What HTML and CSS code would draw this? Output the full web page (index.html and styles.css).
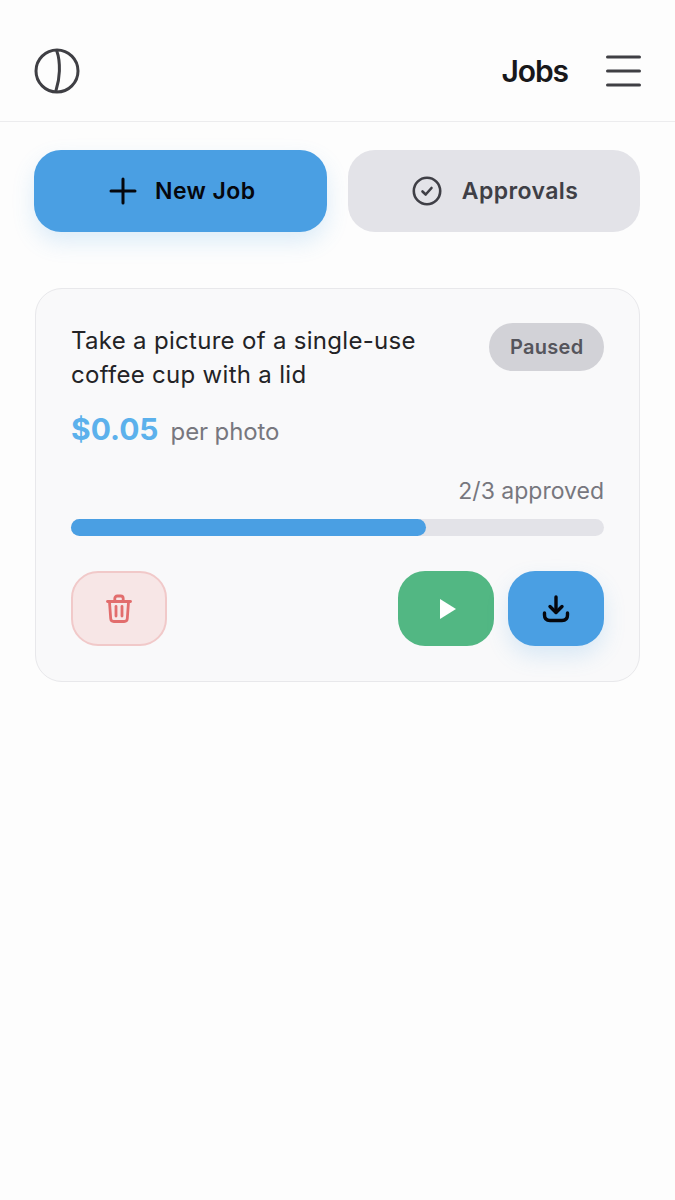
FILE: index.html
```html
<!DOCTYPE html>
<html>
<head>
    <title>Jobs</title>
    <link rel="stylesheet" href="styles.css">
</head>
<body>
    <header class="topbar">
        <svg class="logo" viewBox="0 0 46 46" fill="none" stroke="#3f3f44" stroke-width="3" stroke-linecap="round">
            <circle cx="23" cy="23" r="21"/>
            <path d="M22.800 3C25 9 25.600 16 25.400 23C25.200 30 24 36 22 42.500"/>
        </svg>
        <div class="topbar-right">
            <span class="page-title">Jobs</span>
            <svg class="menu-icon" viewBox="0 0 36 34" fill="none" stroke="#3f3f44" stroke-width="3" stroke-linecap="round">
                <path d="M2.500 3H34.500"/>
                <path d="M2.500 17H34.500"/>
                <path d="M2.500 31H34.500"/>
            </svg>
        </div>
    </header>

    <main class="content">
        <div class="actions">
            <button class="btn btn-primary">
                <svg class="btn-icon-plus" viewBox="0 0 28 28" fill="none" stroke="#05070d" stroke-width="3" stroke-linecap="round">
                    <path d="M14 2V26"/>
                    <path d="M2 14H26"/>
                </svg>
                <span class="btn-label">New Job</span>
            </button>
            <button class="btn btn-secondary">
                <svg class="btn-icon-check" viewBox="0 0 30 30" fill="none" stroke="#3f3f46" stroke-width="2.6" stroke-linecap="round" stroke-linejoin="round">
                    <circle cx="15" cy="15" r="13.200"/>
                    <path d="M10.500 15.500L13.700 18.500L19.500 12"/>
                </svg>
                <span class="btn-label">Approvals</span>
            </button>
        </div>

        <section class="job-card">
            <div class="job-head">
                <p class="job-title">Take a picture of a single-use coffee cup with a lid</p>
                <span class="badge">Paused</span>
            </div>
            <div class="job-price">
                <span class="price">$0.05</span>
                <span class="price-unit">per photo</span>
            </div>
            <div class="job-count">2/3 approved</div>
            <div class="progress">
                <div class="progress-fill" style="width: 66.67%"></div>
            </div>
            <div class="job-actions">
                <button class="icon-btn icon-btn-delete">
                    <svg width="28" height="30" viewBox="0 0 28 30" fill="none" stroke="#e26d6d" stroke-width="2.8" stroke-linecap="round" stroke-linejoin="round">
                        <path d="M2.500 7.500H25.500"/>
                        <path d="M9.800 7V4.500C9.800 3 10.800 2 12.300 2H15.700C17.200 2 18.200 3 18.200 4.500V7"/>
                        <path d="M4.500 8L5.700 24.500C5.800 26.500 7 27.500 8.800 27.500H19.200C21 27.500 22.200 26.500 22.300 24.500L23.500 8"/>
                        <path d="M11 12.500V22"/>
                        <path d="M17 12.500V22"/>
                    </svg>
                </button>
                <div class="job-actions-right">
                    <button class="icon-btn icon-btn-play">
                        <svg class="play-icon" width="18" height="20" viewBox="0 0 18 20"><path d="M1 0L17 10L1 20Z" fill="#fff"/></svg>
                    </button>
                    <button class="icon-btn icon-btn-download">
                        <svg width="28" height="28" viewBox="0 0 28 28" fill="none" stroke="#05070d" stroke-width="3.4" stroke-linecap="round" stroke-linejoin="round">
                            <path d="M14 2V17"/>
                            <path d="M8 11.500L14 17.500L20 11.500"/>
                            <path d="M2.500 18V20C2.500 23.500 4.500 25.500 8 25.500H20C23.500 25.500 25.500 23.500 25.500 20V18"/>
                        </svg>
                    </button>
                </div>
            </div>
        </section>
    </main>
</body>
</html>
```

FILE: styles.css
```css
* {
    box-sizing: border-box;
}

body {
    margin: 0;
    background-color: #fdfdfd;
    font-family: Inter, "Noto Sans", sans-serif;
    color: #1c1c1f;
}

.topbar {
    display: flex;
    align-items: center;
    justify-content: space-between;
    height: 122px;
    padding: 20px 34px 0;
    border-bottom: 1px solid #ececee;
}

.logo {
    width: 46px;
    height: 46px;
}

.topbar-right {
    display: flex;
    align-items: center;
    gap: 37px;
}

.page-title {
    font-size: 30px;
    font-weight: 600;
    letter-spacing: -1.1px;
    color: #18181b;
}

.menu-icon {
    width: 36px;
    height: 34px;
}

.content {
    padding: 28px 35px;
}

.actions {
    display: grid;
    grid-template-columns: 1fr 1fr;
    gap: 21px;
    margin-bottom: 56px;
    margin-left: -1px;
}

.btn {
    display: flex;
    align-items: center;
    justify-content: center;
    gap: 18px;
    height: 82px;
    border: none;
    border-radius: 27px;
    font-family: inherit;
    font-size: 23px;
    font-weight: 600;
    cursor: pointer;
}

.btn-label {
    letter-spacing: 0.4px;
}

.btn-primary {
    padding: 0 0 0 4px;
    background-color: #4a9fe3;
    color: #05070d;
    box-shadow: 0 10px 22px rgba(74, 159, 227, 0.18);
}

.btn-secondary {
    gap: 19.5px;
    padding: 0 0 0 3px;
    background-color: #e3e3e8;
    color: #3f3f46;
}

.btn-icon-plus {
    width: 28px;
    height: 28px;
}

.btn-icon-check {
    width: 30px;
    height: 30px;
}

.job-card {
    padding: 35px;
    background-color: #f9f9fa;
    border: 1px solid #e8e8eb;
    border-radius: 27px;
}

.job-head {
    display: flex;
    align-items: flex-start;
    justify-content: space-between;
    gap: 20px;
    margin-bottom: 19px;
}

.job-title {
    margin: 0;
    font-size: 24px;
    line-height: 34px;
    letter-spacing: 0.3px;
    color: #232326;
}

.badge {
    flex-shrink: 0;
    margin-top: -1px;
    padding: 0 20.5px;
    height: 48px;
    line-height: 48px;
    background-color: #d2d2d7;
    border-radius: 24px;
    font-size: 20px;
    font-weight: 600;
    letter-spacing: 0.3px;
    color: #55555c;
}

.job-price {
    display: flex;
    align-items: baseline;
    gap: 12px;
    margin-bottom: 30px;
}

.price {
    font-size: 30px;
    font-weight: 700;
    color: #5cb1ec;
}

.price-unit {
    font-size: 24px;
    letter-spacing: -0.1px;
    color: #77777e;
}

.job-count {
    margin-bottom: 14px;
    text-align: right;
    font-size: 23px;
    color: #77777e;
}

.progress {
    height: 17px;
    margin-bottom: 35px;
    background-color: #e3e3e8;
    border-radius: 9px;
}

.progress-fill {
    height: 100%;
    background-color: #4a9fe3;
    border-radius: 9px;
}

.job-actions {
    display: flex;
    justify-content: space-between;
}

.job-actions-right {
    display: flex;
    gap: 14px;
}

.icon-btn {
    display: flex;
    align-items: center;
    justify-content: center;
    width: 96px;
    height: 75px;
    padding: 0;
    border: none;
    border-radius: 27px;
    cursor: pointer;
}

.icon-btn-delete {
    background-color: #f7e6e6;
    border: 2px solid #f1c9c9;
}

.icon-btn-play {
    background-color: #52b783;
}

.play-icon {
    margin-left: 4px;
}

.icon-btn-download {
    background-color: #4a9fe3;
    box-shadow: 0 10px 22px rgba(74, 159, 227, 0.18);
}
```
